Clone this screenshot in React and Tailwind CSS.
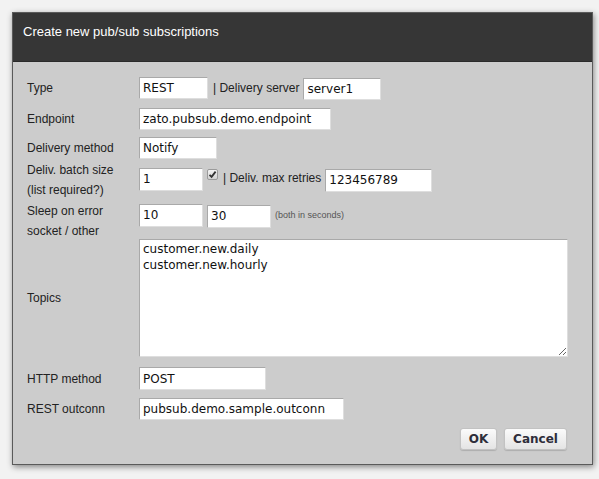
import React from 'react';

const labelCls = "w-[112px] shrink-0 text-[12px] leading-[20px] text-[#222]";
const inputCls = "bg-white border border-[#a9a9a9] border-b-[#dedede] border-r-[#dedede] pl-[3px] text-[12px] text-[#111] font-['DejaVu_Sans',sans-serif] outline-none";

const Field = ({value, w, h = 22}) => (
    <input type="text" readOnly defaultValue={value} className={inputCls} style={{width: w, height: h}} />
);

const Check = () => (
    <span className="w-[11px] h-[11px] rounded-[2px] border border-[#9a9a9a] bg-gradient-to-b from-[#f4f4f4] to-[#d2d2d2] flex items-center justify-center">
        <svg width="9" height="9" viewBox="0 0 9 9">
            <path d="M1.5 4.8 L3.6 6.9 L7.6 1.6" fill="none" stroke="#333" strokeWidth="1.8" />
        </svg>
    </span>
);

const App = () => {
    return (
        <div className="w-[599px] h-[479px] bg-[#f2f2f2] pt-[12px] pl-[12px] font-['Liberation_Sans',Arial,sans-serif]">
            <div className="w-[581px] h-[453px] border border-[#5a5a5a] bg-[#cccccc] shadow-[1px_2px_6px_rgba(0,0,0,0.45)] flex flex-col">
                <div className="h-[49px] bg-[#363636] border-b border-[#2a2a2a] pl-[10px] pt-[11px] text-[13px] leading-[16px] text-white">
                    Create new pub/sub subscriptions
                </div>
                <div className="flex flex-col pl-[14px] pr-[24px] pt-[15px]">
                    <div className="flex items-center h-[22px]">
                        <span className={labelCls}>Type</span>
                        <Field value="REST" w={69} />
                        <span className="ml-[5px] text-[12px] text-[#222]">| Delivery server</span>
                        <span className="ml-[4px]"><Field value="server1" w={78} /></span>
                    </div>
                    <div className="flex items-center h-[22px] mt-[9px]">
                        <span className={labelCls}>Endpoint</span>
                        <Field value="zato.pubsub.demo.endpoint" w={192} />
                    </div>
                    <div className="flex items-center h-[22px] mt-[7px]">
                        <span className={labelCls}>Delivery method</span>
                        <Field value="Notify" w={78} />
                    </div>
                    <div className="flex items-start h-[40px] mt-[1px]">
                        <span className={labelCls}>Deliv. batch size<br />(list required?)</span>
                        <div className="flex items-center mt-[7px]">
                            <Field value="1" w={64} h={23} />
                            <span className="ml-[4px] -mt-[9px]"><Check /></span>
                            <span className="ml-[5px] text-[12px] text-[#222] -mt-[2px]">| Deliv. max retries</span>
                            <span className="ml-[4px]"><Field value="123456789" w={107} h={23} /></span>
                        </div>
                    </div>
                    <div className="flex items-start h-[38px] mt-[1px]">
                        <span className={labelCls}>Sleep on error<br />socket / other</span>
                        <div className="flex items-center mt-[2px]">
                            <Field value="10" w={64} h={23} />
                            <span className="ml-[4px]"><Field value="30" w={64} h={23} /></span>
                            <span className="ml-[4px] text-[9px] text-[#555]">(both in seconds)</span>
                        </div>
                    </div>
                    <div className="flex items-center h-[118px]">
                        <span className={labelCls}>Topics</span>
                        <textarea readOnly defaultValue={"customer.new.daily\ncustomer.new.hourly"} className={inputCls + " w-[430px] h-[118px] pt-[1px] leading-[16px]"} />
                    </div>
                    <div className="flex items-center h-[23px] mt-[10px]">
                        <span className={labelCls}>HTTP method</span>
                        <Field value="POST" w={127} h={23} />
                    </div>
                    <div className="flex items-center h-[22px] mt-[8px]">
                        <span className={labelCls}>REST outconn</span>
                        <Field value="pubsub.demo.sample.outconn" w={205} />
                    </div>
                    <div className="flex justify-end gap-[7px] mt-[8px] pr-[1px]">
                        <button type="button" className="h-[22px] w-[37px] rounded-[3px] border border-[#c2c2c2] bg-gradient-to-b from-[#fbfbfb] to-[#e4e4e4] shadow-[0_1px_1px_rgba(0,0,0,0.15)] text-[12px] font-bold text-[#2e2e3a] font-['DejaVu_Sans',sans-serif]">
                            OK
                        </button>
                        <button type="button" className="h-[22px] w-[63px] rounded-[3px] border border-[#c2c2c2] bg-gradient-to-b from-[#fbfbfb] to-[#e4e4e4] shadow-[0_1px_1px_rgba(0,0,0,0.15)] text-[12px] font-bold text-[#2e2e3a] font-['DejaVu_Sans',sans-serif]">
                            Cancel
                        </button>
                    </div>
                </div>
            </div>
        </div>
    );
};

export default App;
